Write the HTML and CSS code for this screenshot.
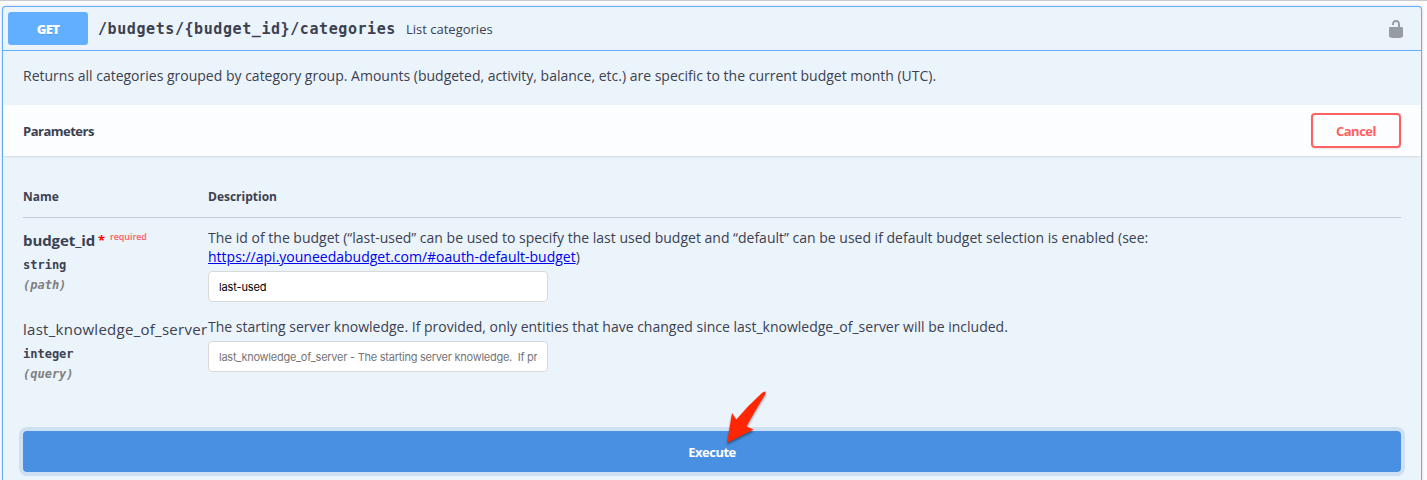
FILE: index.html
```html
<!DOCTYPE html>
<html lang="en">
<head>
<meta charset="utf-8">
<title>List categories</title>
<link rel="stylesheet" href="styles.css">
</head>
<body>
<section class="opblock">
  <header class="summary">
    <span class="method">GET</span>
    <span class="path">/budgets/{budget_id}/categories</span>
    <span class="summary-text">List categories</span>
    <svg class="lock" width="20" height="20" viewBox="0 0 20 20"><path d="M15.8 8H14V5.6C14 2.703 12.665 1 10 1 7.334 1 6 2.703 6 5.6V6h2v-.801C8 3.754 8.797 3 10 3c1.203 0 2 .754 2 2.199V8H4c-.553 0-1 .646-1 1.199V17c0 .549.428 1.139.951 1.307l1.197.387C5.672 18.861 6.55 19 7.1 19h5.8c.549 0 1.428-.139 1.951-.307l1.196-.387c.524-.167.953-.757.953-1.306V9.199C17 8.646 16.352 8 15.8 8z"/></svg>
  </header>
  <p class="intro">Returns all categories grouped by category group. Amounts (budgeted, activity, balance, etc.) are specific to the current budget month (UTC).</p>
  <div class="section-header">
    <h4 class="section-title">Parameters</h4>
    <button class="cancel">Cancel</button>
  </div>
  <div class="parameters">
    <div class="row head"><span>Name</span><span>Description</span></div>
    <div class="row first">
      <div>
        <div class="name required"><span class="name-bold">budget_id</span><span class="star">*</span><span class="required-label">required</span></div>
        <div class="type">string</div>
        <div class="location">(path)</div>
      </div>
      <div>
        <p class="desc">The id of the budget (“last-used” can be used to specify the last used budget and “default” can be used if default budget selection is enabled (see: <br><a class="link" href="#oauth-default-budget">https://api.youneedabudget.com/#oauth-default-budget</a>)</p>
        <input class="field" type="text" value="last-used">
      </div>
    </div>
    <div class="row second">
      <div>
        <div class="name"><span class="name-plain">last_knowledge_of_server</span></div>
        <div class="type">integer</div>
        <div class="location">(query)</div>
      </div>
      <div>
        <p class="desc">The starting server knowledge. If provided, only entities that have changed since last_knowledge_of_server will be included.</p>
        <input class="field" type="text" placeholder="last_knowledge_of_server - The starting server knowledge.  If provided, only entities">
      </div>
    </div>
  </div>
  <button class="execute">Execute</button>
</section>
<svg class="arrow" width="60" height="70" viewBox="0 0 60 70"><path d="M45.5 12Q46 11.300 45 11.800Q44 11.300 42 13Q28 25.500 16.300 39.500L12 33L7 63L33.700 49.500L26.500 46.500Q33 34 45.700 13.500Z"/></svg>
</body>
</html>
```
FILE: styles.css
```css
* { box-sizing: border-box; }
body {
  margin: 0;
  padding: 6px 6px 0 2px;
  height: 480px;
  overflow: hidden;
  position: relative;
  background: linear-gradient(#c9c8d0 1px, #fcfcfe 1px);
  color: #3b4151;
  font-family: "Open Sans", sans-serif;
}
.opblock {
  width: 1420px;
  height: 474px;
  border: 1px solid #61affe;
  border-bottom: 0;
  border-radius: 4px 4px 0 0;
  background: #ebf3fb;
  box-shadow: 0 0 3px rgba(0, 0, 0, .19);
}
.summary {
  height: 44px;
  padding: 0 15px 0 5px;
  display: flex;
  align-items: center;
  border-bottom: 1px solid #61affe;
}
.method {
  width: 80px;
  height: 33px;
  line-height: 34px;
  border-radius: 3px;
  background: #61affe;
  color: #fff;
  text-align: center;
  font-size: 13px;
  font-weight: 800;
  letter-spacing: -.7px;
  text-shadow: 0 1px 0 rgba(0, 0, 0, .1);
}
.path {
  margin-left: 10px;
  width: 298px;
  white-space: nowrap;
  font: 700 15px "DejaVu Sans Mono", monospace;
  letter-spacing: .58px;
  padding-top: 1px;
}
.summary-text { margin-left: 10px; font-size: 13px; flex: 1; }
.lock { fill: #979ca1; }
.intro {
  margin: 0;
  height: 54px;
  padding: 15px 20px;
  font-size: 14px;
  line-height: 20px;
}
.section-header {
  height: 51px;
  padding: 0 20px;
  display: flex;
  align-items: center;
  justify-content: space-between;
  background: #fcfdfe;
  box-shadow: 0 1px 2px rgba(0, 0, 0, .1);
}
.section-title { margin: 1px 0 0; font-size: 13px; letter-spacing: -.5px; }
.cancel {
  width: 90px;
  height: 35px;
  padding: 1px 0 0;
  border: 2px solid #ff6060;
  border-radius: 4px;
  background: transparent;
  color: #ff6060;
  font: 700 13px "Open Sans", sans-serif;
  letter-spacing: -.5px;
  box-shadow: 0 1px 2px rgba(0, 0, 0, .1);
}
.parameters { padding: 20px 20px 0; height: 275px; }
.row { display: grid; grid-template-columns: 185px 1fr; }
.head {
  height: 42px;
  padding-top: 12px;
  border-bottom: 1px solid #c6ccd6;
  font-size: 12px;
  line-height: 17px;
  font-weight: 700;
}
.first { padding-top: 10px; height: 99px; }
.second { height: 90px; }
.name { height: 29px; display: flex; white-space: nowrap; line-height: 25px; }
.name-bold { width: 75px; font-size: 15px; font-weight: 700; letter-spacing: -.08px; }
.name-plain { font-size: 15px; letter-spacing: .27px; }
.star { width: 12px; color: #f00; font-size: 13px; font-weight: 700; line-height: 24px; }
.required-label { color: #ff6060; font-size: 9px; line-height: 18px; font-weight: 600; letter-spacing: -.1px; }
.type { font: 700 12px/16px "DejaVu Sans Mono", monospace; }
.location {
  margin-top: 4px;
  color: #808080;
  font: italic 700 12px/16px "DejaVu Sans Mono", monospace;
}
.desc { margin: 0; font-size: 14px; line-height: 19px; white-space: nowrap; }
.link { color: #0000ee; }
.field {
  display: block;
  width: 340px;
  height: 31px;
  margin-top: 5px;
  padding: 1px 10px 0;
  border: 1px solid #d9d9d9;
  border-radius: 4px;
  background: #fff;
  color: #000;
  font: 11px Inter, sans-serif;
  letter-spacing: -.12px;
}
.field::placeholder { color: #757575; letter-spacing: -.25px; }
.execute {
  display: block;
  width: 1378px;
  height: 41px;
  margin: 0 20px;
  padding: 1px 0 0;
  border: 0;
  border-radius: 4px;
  background: #4990e2;
  color: #fff;
  font: 700 13px "Open Sans", sans-serif;
  letter-spacing: -.5px;
  box-shadow: 0 0 0 4px #d0e0f4;
}
.arrow {
  position: absolute;
  left: 720px;
  top: 380px;
  fill: #ff2600;
  filter: drop-shadow(0 2px 1px rgba(0, 0, 0, .4));
}
```
